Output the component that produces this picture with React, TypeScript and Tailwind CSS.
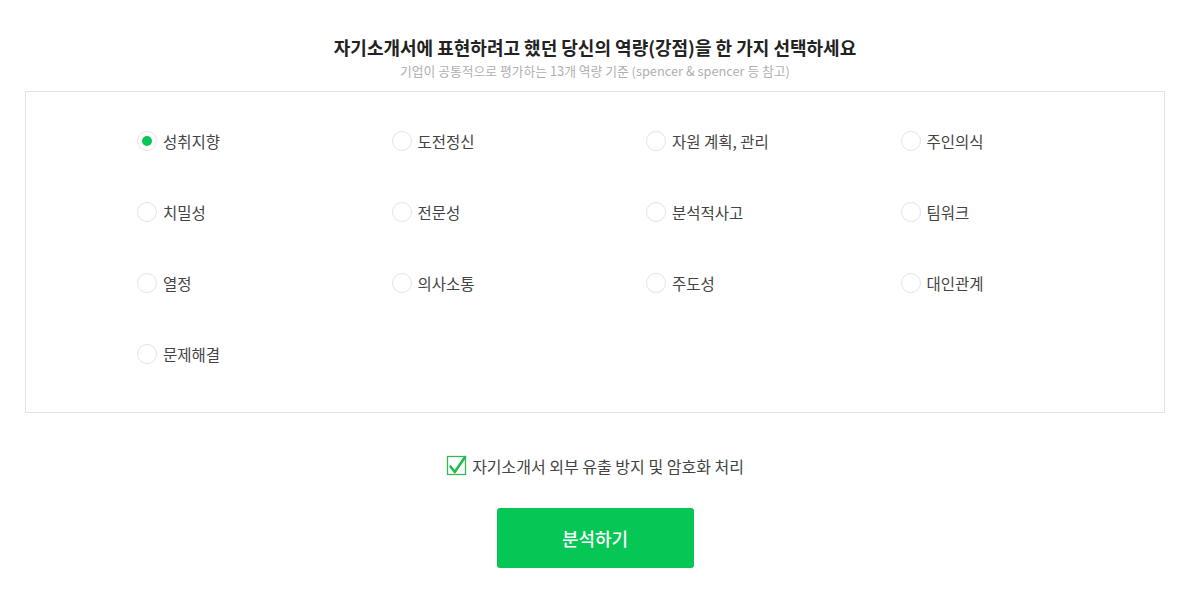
import React, { useState } from "react";

const options = [
  "성취지향", "도전정신", "자원 계획, 관리", "주인의식",
  "치밀성", "전문성", "분석적사고", "팀워크",
  "열정", "의사소통", "주도성", "대인관계",
  "문제해결",
];

export default function App() {
  const [sel, setSel] = useState(0);
  return (
    <div
      className="w-[1190px] h-[598px] bg-white text-[#333]"
      style={{ fontFamily: '"Noto Sans CJK KR", "Noto Sans", sans-serif' }}
    >
      <div className="pt-[34px] flex flex-col items-center">
        <h1 className="text-[18px] font-bold text-[#222] leading-[26px]">
          자기소개서에 표현하려고 했던 당신의 역량(강점)을 한 가지 선택하세요
        </h1>
        <p className="text-[12.8px] text-[#b0b0b0] leading-[18px] mt-[2px]">
          기업이 공통적으로 평가하는 13개 역량 기준 (spencer &amp; spencer 등 참고)
        </p>
      </div>
      <div className="mx-[25px] mt-[11px] h-[322px] border border-[#e3e3e3] pl-[111px] pt-[13px]">
        <div className="grid grid-cols-[repeat(4,254.5px)] auto-rows-[71px]">
          {options.map((o, i) => (
            <label key={o} className="flex items-center cursor-pointer" onClick={() => setSel(i)}>
              <span className="w-[20px] h-[20px] rounded-full border border-[#e4e4e4] flex items-center justify-center bg-white">
                {sel === i && <span className="w-[10px] h-[10px] rounded-full bg-[#06c755]" />}
              </span>
              <span className="ml-[6px] text-[15.5px] text-[#444] leading-[20px]">{o}</span>
            </label>
          ))}
        </div>
      </div>
      <div className="flex justify-center items-center mt-[42px]">
        <svg width="22" height="22" viewBox="0 0 22 22" className="mr-[4px] -mt-[1px]">
          <rect x="1.5" y="2.5" width="18" height="18" fill="white" stroke="#3bb55a" strokeWidth="1.3" />
          <path d="M4.5 12.5 L8.8 18 L19 3" fill="none" stroke="#1fbf4a" strokeWidth="2.6" strokeLinecap="round" strokeLinejoin="round" />
        </svg>
        <span className="text-[16px] text-[#444] leading-[20px]">자기소개서 외부 유출 방지 및 암호화 처리</span>
      </div>
      <div className="flex justify-center mt-[32px]">
        <button className="w-[197px] h-[60px] rounded-[3px] bg-[#06c755] text-white text-[18px] font-medium">
          분석하기
        </button>
      </div>
    </div>
  );
}
